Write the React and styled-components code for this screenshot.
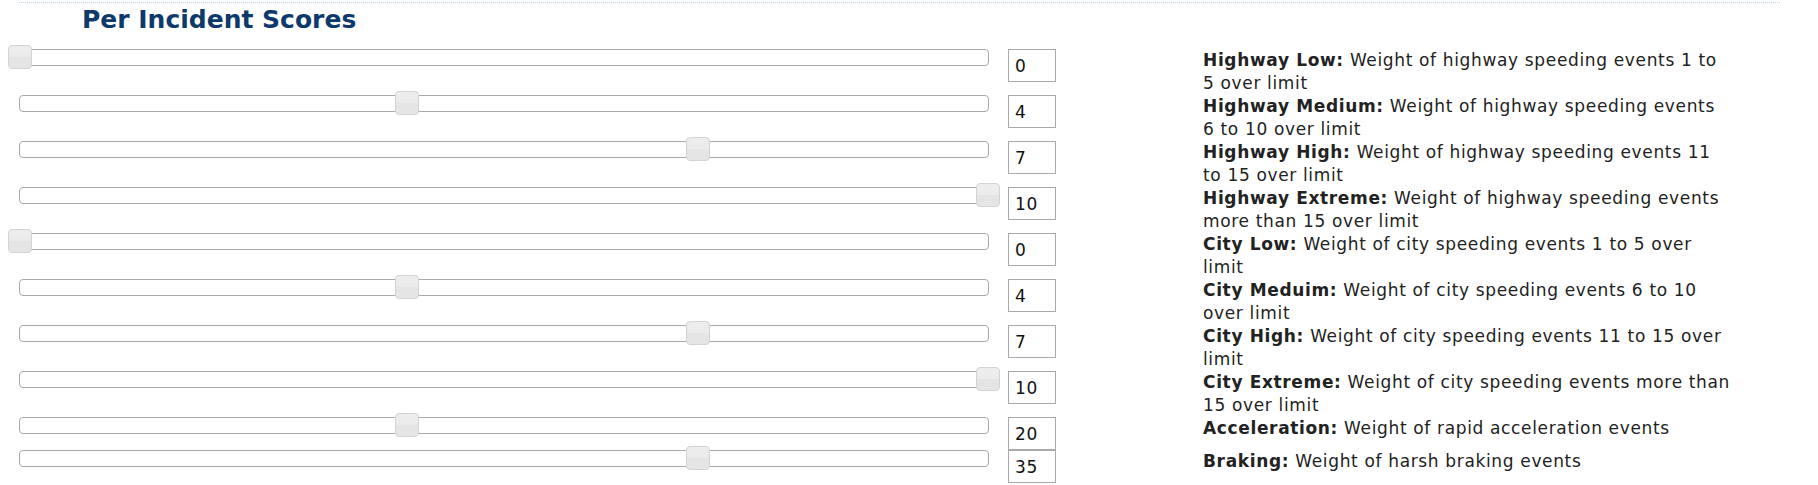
import React from 'react'
import styled, { createGlobalStyle } from 'styled-components'

const GlobalStyle = createGlobalStyle`
  html, body {
    margin: 0;
    padding: 0;
    background: #fff;
  }
  body {
    font-family: 'DejaVu Sans', Verdana, sans-serif;
    color: #222;
  }
`

const Panel = styled.div`
  margin: 2px 0 0 19px;
  width: 1761px;
  border-top: 1px dotted #bcd5ec;
`

const Title = styled.h2`
  margin: 2px 0 14px 63px;
  font-size: 25px;
  line-height: 30px;
  font-weight: bold;
  color: #0d3a6b;
`

const Row = styled.div`
  display: flex;
  align-items: flex-start;
`

const Track = styled.div`
  position: relative;
  box-sizing: border-box;
  width: 970px;
  height: 17px;
  border: 1px solid #aaa;
  border-radius: 4px;
  background: #fff;
  flex-shrink: 0;
`

const Handle = styled.span`
  position: absolute;
  top: -5px;
  margin-left: -12px;
  box-sizing: border-box;
  width: 24px;
  height: 24px;
  border: 1px solid #d3d3d3;
  border-radius: 4px;
  background: linear-gradient(#ededed 0%, #ebebeb 50%, #e4e4e4 51%, #e6e6e6 100%);
`

const ValueBox = styled.input`
  box-sizing: border-box;
  width: 48px;
  height: 33px;
  margin: 0 147px 0 19px;
  padding: 0 0 0 6px;
  border: 1px solid #aaa;
  border-radius: 0;
  font-family: 'DejaVu Sans', Verdana, sans-serif;
  font-size: 17px;
  letter-spacing: 0.65px;
  color: #111;
  background: #fff;
  flex-shrink: 0;
  outline: none;
`

const Desc = styled.div`
  width: 530px;
  font-size: 17px;
  line-height: 23px;
  letter-spacing: 0.65px;
  color: #222;
`

// the source page wraps each description at these words
const Line = styled.div`
  white-space: nowrap;
`

const Label = styled.b`
  font-weight: bold;
`

const scores = [
  { label: 'Highway Low', lines: ['Weight of highway speeding events 1 to', '5 over limit'], value: 0, max: 10 },
  { label: 'Highway Medium', lines: ['Weight of highway speeding events', '6 to 10 over limit'], value: 4, max: 10 },
  { label: 'Highway High', lines: ['Weight of highway speeding events 11', 'to 15 over limit'], value: 7, max: 10 },
  { label: 'Highway Extreme', lines: ['Weight of highway speeding events', 'more than 15 over limit'], value: 10, max: 10 },
  { label: 'City Low', lines: ['Weight of city speeding events 1 to 5 over', 'limit'], value: 0, max: 10 },
  { label: 'City Meduim', lines: ['Weight of city speeding events 6 to 10', 'over limit'], value: 4, max: 10 },
  { label: 'City High', lines: ['Weight of city speeding events 11 to 15 over', 'limit'], value: 7, max: 10 },
  { label: 'City Extreme', lines: ['Weight of city speeding events more than', '15 over limit'], value: 10, max: 10 },
  { label: 'Acceleration', lines: ['Weight of rapid acceleration events'], value: 20, max: 50 },
  { label: 'Braking', lines: ['Weight of harsh braking events'], value: 35, max: 50 },
]

function ScoreRow({ label, lines, value, max }) {
  const [first, ...rest] = lines
  return (
    <Row>
      <Track>
        <Handle style={{ left: `${(value / max) * 100}%` }} />
      </Track>
      <ValueBox type="text" defaultValue={value} />
      <Desc>
        <Line>
          <Label>{label}:</Label> {first}
        </Line>
        {rest.map(l => (
          <Line key={l}>{l}</Line>
        ))}
      </Desc>
    </Row>
  )
}

export default function App() {
  return (
    <>
      <GlobalStyle />
      <Panel>
        <Title>Per Incident Scores</Title>
        {scores.map(s => (
          <ScoreRow key={s.label} {...s} />
        ))}
      </Panel>
    </>
  )
}
